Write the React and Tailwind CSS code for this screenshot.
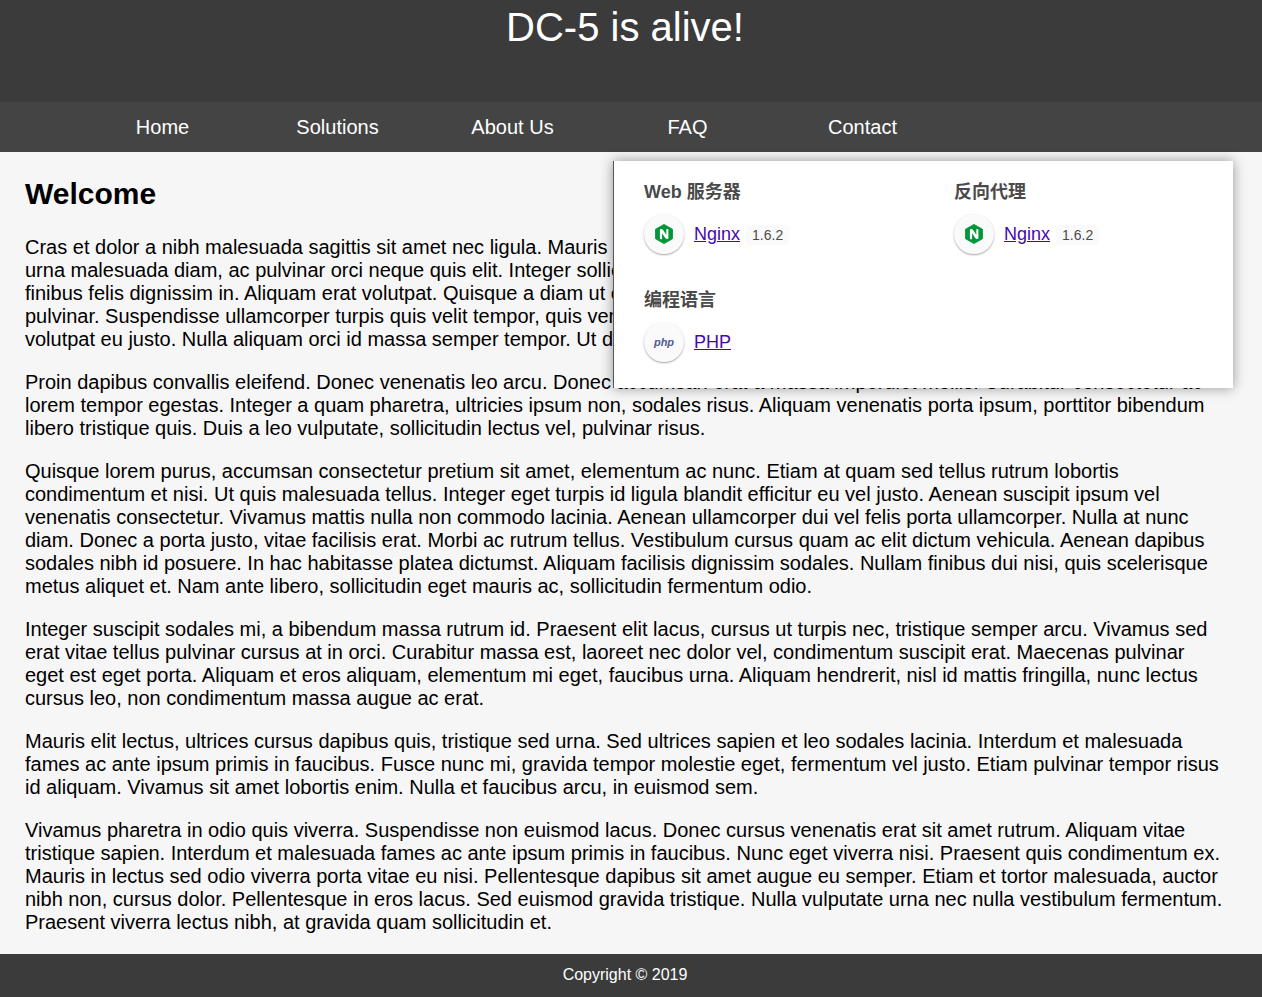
import React from "react";

const NAV_LINKS = ["Home", "Solutions", "About Us", "FAQ", "Contact"];

const PARAGRAPHS = [
  "Cras et dolor a nibh malesuada sagittis sit amet nec ligula. Mauris commodo, justo non tempus luctus, est lectus convallis felis, sed urna malesuada diam, ac pulvinar orci neque quis elit. Integer sollicitudin tellus vitae lorem euismod, at egestas purus tincidunt, nec finibus felis dignissim in. Aliquam erat volutpat. Quisque a diam ut odio pretium vehicula. Donec id mauris sed lectus feugiat lacinia pulvinar. Suspendisse ullamcorper turpis quis velit tempor, quis venenatis lectus tincidunt. Praesent sit amet massa nec turpis sodales volutpat eu justo. Nulla aliquam orci id massa semper tempor. Ut dapibus sem vitae nisi mattis.",
  "Proin dapibus convallis eleifend. Donec venenatis leo arcu. Donec accumsan erat a massa imperdiet mollis. Curabitur consectetur ac lorem tempor egestas. Integer a quam pharetra, ultricies ipsum non, sodales risus. Aliquam venenatis porta ipsum, porttitor bibendum libero tristique quis. Duis a leo vulputate, sollicitudin lectus vel, pulvinar risus.",
  "Quisque lorem purus, accumsan consectetur pretium sit amet, elementum ac nunc. Etiam at quam sed tellus rutrum lobortis condimentum et nisi. Ut quis malesuada tellus. Integer eget turpis id ligula blandit efficitur eu vel justo. Aenean suscipit ipsum vel venenatis consectetur. Vivamus mattis nulla non commodo lacinia. Aenean ullamcorper dui vel felis porta ullamcorper. Nulla at nunc diam. Donec a porta justo, vitae facilisis erat. Morbi ac rutrum tellus. Vestibulum cursus quam ac elit dictum vehicula. Aenean dapibus sodales nibh id posuere. In hac habitasse platea dictumst. Aliquam facilisis dignissim sodales. Nullam finibus dui nisi, quis scelerisque metus aliquet et. Nam ante libero, sollicitudin eget mauris ac, sollicitudin fermentum odio.",
  "Integer suscipit sodales mi, a bibendum massa rutrum id. Praesent elit lacus, cursus ut turpis nec, tristique semper arcu. Vivamus sed erat vitae tellus pulvinar cursus at in orci. Curabitur massa est, laoreet nec dolor vel, condimentum suscipit erat. Maecenas pulvinar eget est eget porta. Aliquam et eros aliquam, elementum mi eget, faucibus urna. Aliquam hendrerit, nisl id mattis fringilla, nunc lectus cursus leo, non condimentum massa augue ac erat.",
  "Mauris elit lectus, ultrices cursus dapibus quis, tristique sed urna. Sed ultrices sapien et leo sodales lacinia. Interdum et malesuada fames ac ante ipsum primis in faucibus. Fusce nunc mi, gravida tempor molestie eget, fermentum vel justo. Etiam pulvinar tempor risus id aliquam. Vivamus sit amet lobortis enim. Nulla et faucibus arcu, in euismod sem.",
  "Vivamus pharetra in odio quis viverra. Suspendisse non euismod lacus. Donec cursus venenatis erat sit amet rutrum. Aliquam vitae tristique sapien. Interdum et malesuada fames ac ante ipsum primis in faucibus. Nunc eget viverra nisi. Praesent quis condimentum ex. Mauris in lectus sed odio viverra porta vitae eu nisi. Pellentesque dapibus sit amet augue eu semper. Etiam et tortor malesuada, auctor nibh non, cursus dolor. Pellentesque in eros lacus. Sed euismod gravida tristique. Nulla vulputate urna nec nulla vestibulum fermentum. Praesent viverra lectus nibh, at gravida quam sollicitudin et.",
];

const NginxIcon = () => (
  <svg width="20" height="20" viewBox="0 0 20 20" aria-hidden="true">
    <path
      d="M10 0.4 18.5 5.2v9.6L10 19.6 1.5 14.8V5.2z"
      fill="#009639"
      stroke="#009639"
      strokeWidth="0.8"
      strokeLinejoin="round"
    />
    <path
      d="M5.9 14.4V6.2C5.9 5.3 6.6 5 7.3 5c.7 0 1.3.3 1.8.9l3.2 4.9V5.9c0-.6.4-1 1-1s1.1.4 1.1 1v8c0 .8-.6 1.2-1.3 1.2-.8 0-1.4-.4-1.9-1L8.1 9.2v5.2c0 .5-.5.9-1.1.9s-1.1-.4-1.1-.9z"
      fill="#fff"
    />
  </svg>
);

const PhpIcon = () => (
  <span className="font-bold italic text-[11px] leading-4 text-[#4f5b93]" aria-hidden="true">
    php
  </span>
);

const TECHNOLOGIES = [
  { category: "Web 服务器", name: "Nginx", version: "1.6.2", Icon: NginxIcon },
  { category: "反向代理", name: "Nginx", version: "1.6.2", Icon: NginxIcon },
  { category: "编程语言", name: "PHP", Icon: PhpIcon },
];

const Technology = ({ category, name, version, Icon }) => (
  <section>
    <h2 className="font-bold text-lg leading-6 text-[#4a4a4a]">{category}</h2>
    <div className="mt-2.5 flex items-center">
      <span className="flex size-10 items-center justify-center rounded-full bg-[#fafafa] shadow-[0_1px_2px_rgba(0,0,0,0.35)]">
        <Icon />
      </span>
      <a href="#" className="ml-2.5 text-lg leading-6 text-[#4608ad] underline">
        {name}
      </a>
      {version && (
        <span className="ml-1.5 mt-0.5 rounded-sm bg-[#fafafa] px-1.5 text-sm leading-5 text-[#4a4a4a]">
          {version}
        </span>
      )}
    </div>
  </section>
);

const TechPanel = () => (
  <aside className="absolute top-[161px] right-[29px] w-[620px] border-l border-[#555] bg-white px-[30px] pt-[19px] pb-[26px] shadow-[0_0_12px_rgba(0,0,0,0.4)]">
    <div className="grid grid-cols-[310px_1fr] gap-y-[34px]">
      {TECHNOLOGIES.map((tech) => (
        <Technology key={tech.category} {...tech} />
      ))}
    </div>
  </aside>
);

export default function App() {
  return (
    <div className="relative min-h-screen bg-[#f6f6f6] text-xl leading-[23px] text-black font-['Liberation_Sans','Noto_Sans_CJK_SC',sans-serif]">
      <header className="h-[102px] bg-[#3b3b3b] pt-1 pr-3">
        <h1 className="text-center text-[40px] leading-[46px] text-white">DC-5 is alive!</h1>
      </header>

      <nav className="bg-[#444] pr-3">
        <ul className="flex pl-[6%]">
          {NAV_LINKS.map((label) => (
            <li key={label} className="w-[175px]">
              <a href="#" className="block text-center leading-[50px] text-white">
                {label}
              </a>
            </li>
          ))}
        </ul>
      </nav>

      <main className="pt-6 pr-[37px] pb-5 pl-[25px]">
        <h2 className="mb-[25px] text-3xl leading-[35px] font-bold">Welcome</h2>
        <div className="flex flex-col gap-5">
          {PARAGRAPHS.map((text) => (
            <p key={text}>{text}</p>
          ))}
        </div>
      </main>

      <footer className="bg-[#3b3b3b] pt-[11px] pr-3 pb-3 text-center text-base leading-5 text-white">
        Copyright © 2019
      </footer>

      <TechPanel />
    </div>
  );
}
